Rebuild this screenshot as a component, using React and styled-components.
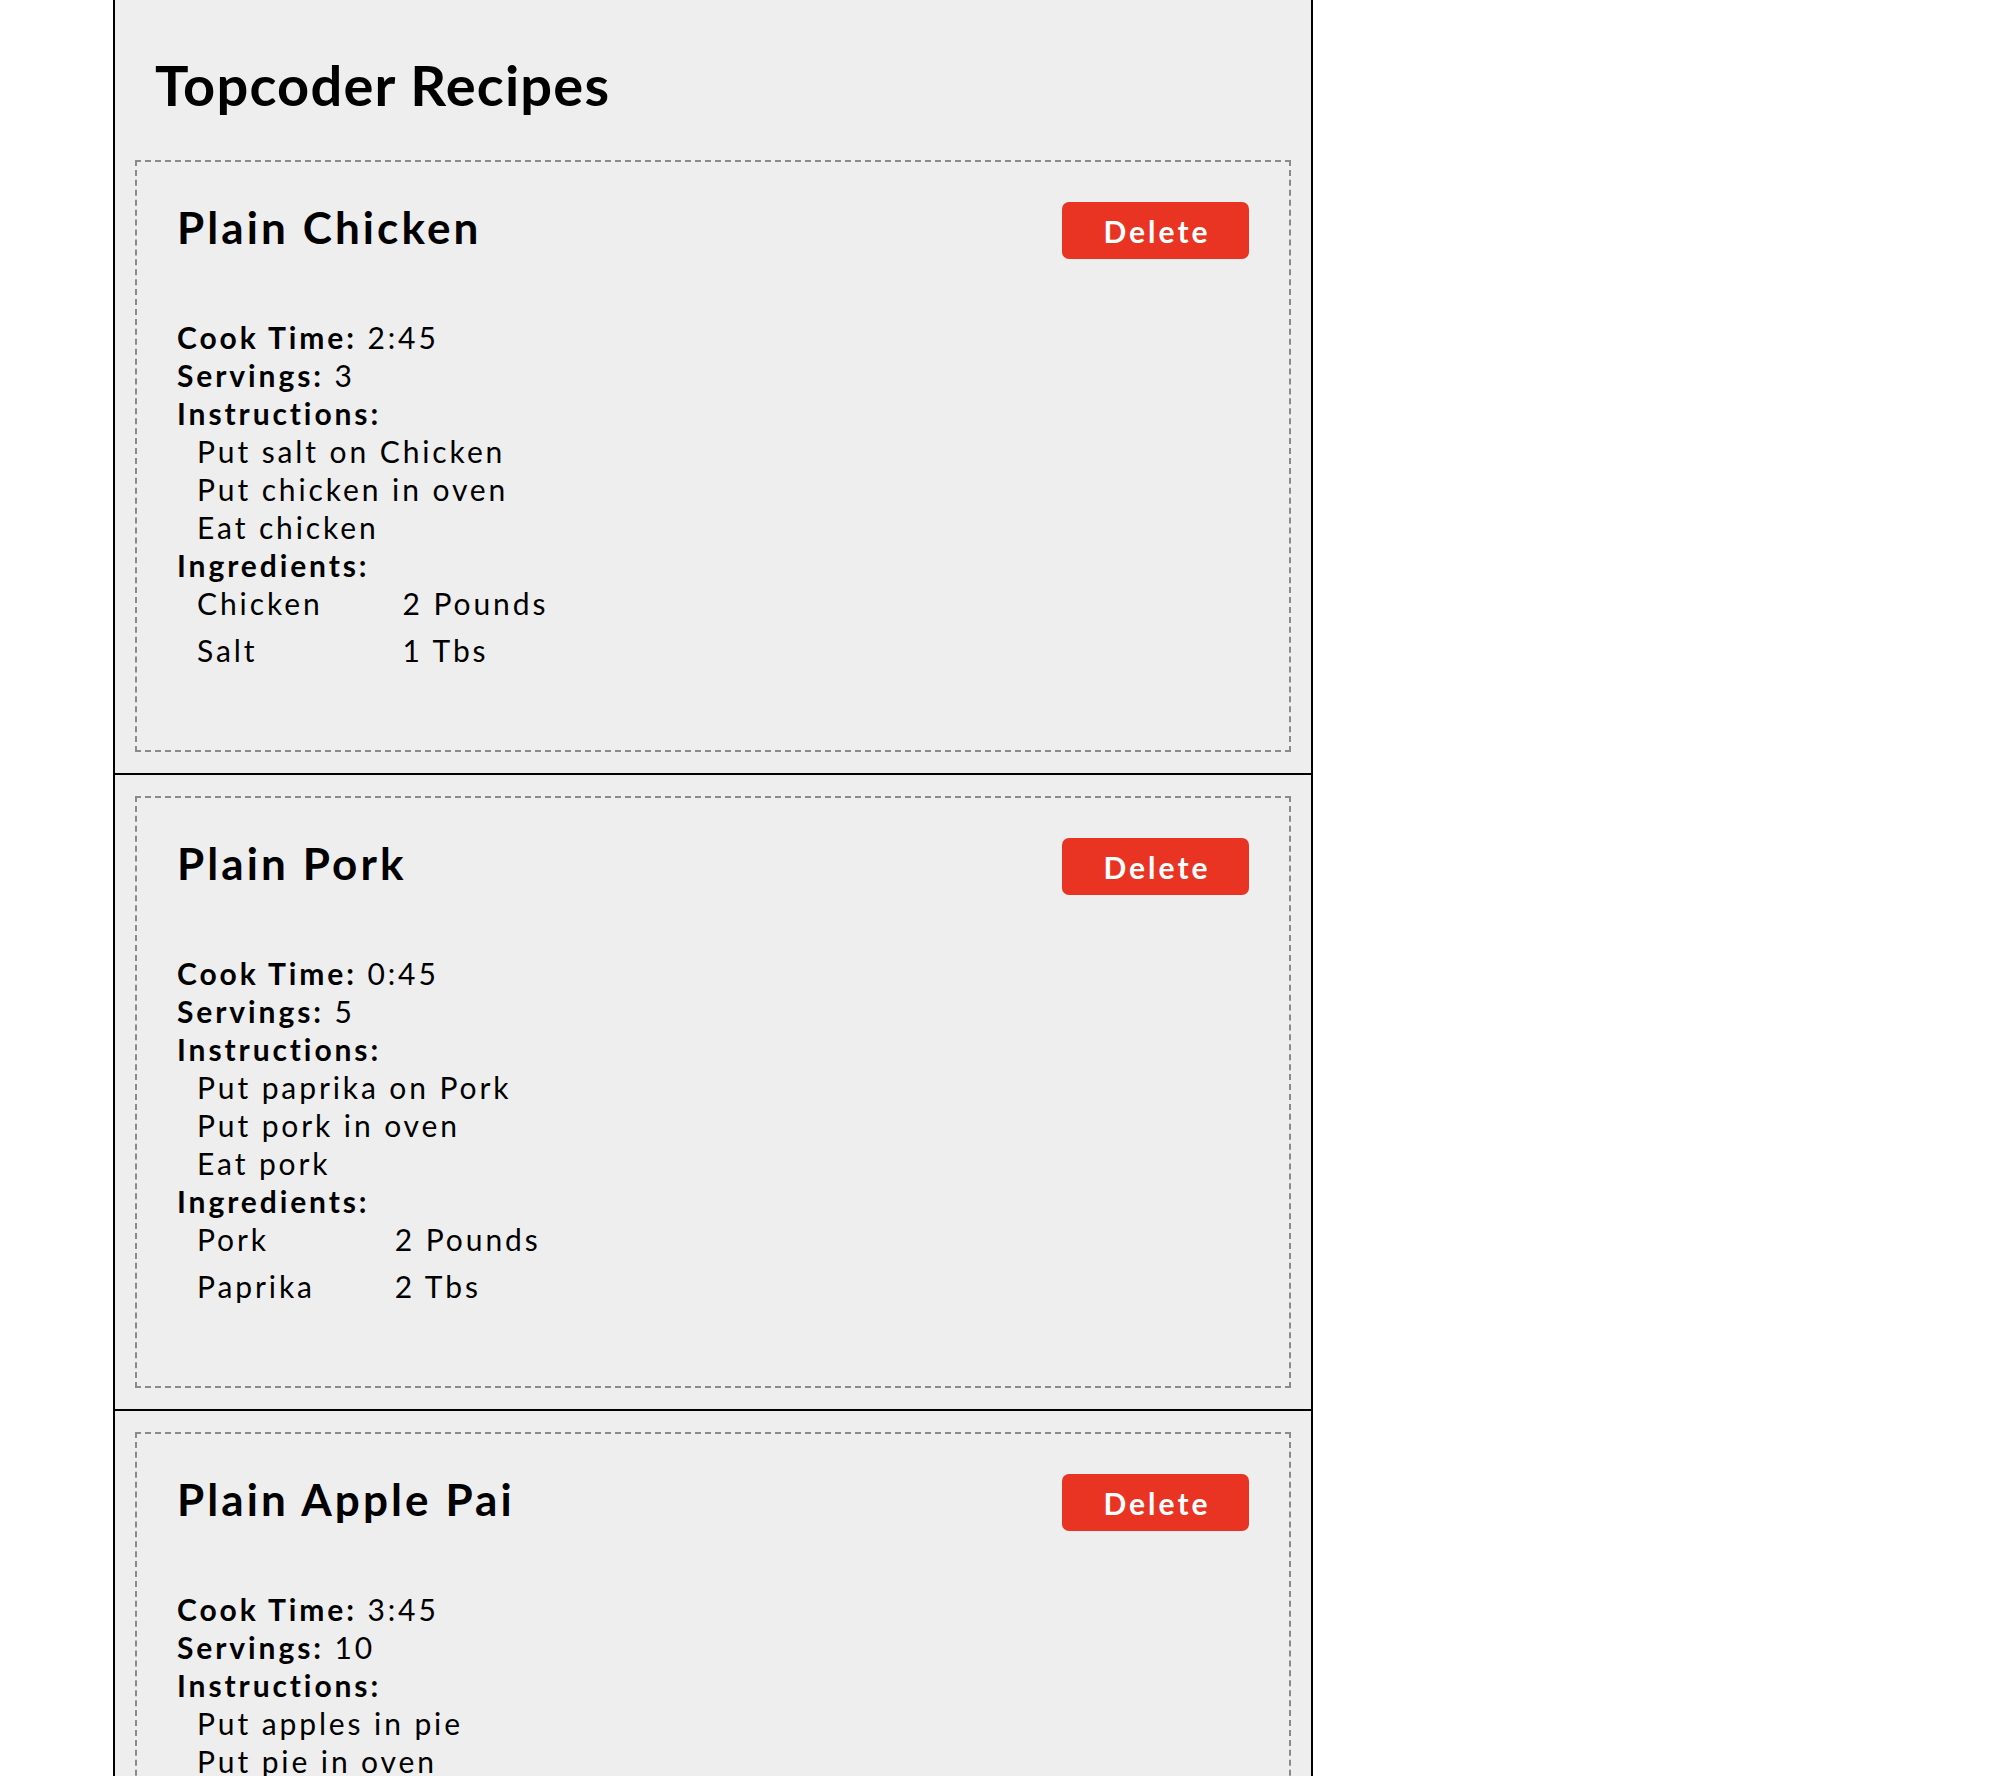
import React from "react";
import styled, { createGlobalStyle } from "styled-components";

const GlobalStyle = createGlobalStyle`
  html, body {
    margin: 0;
    padding: 0;
    background: #ffffff;
  }
  body {
    font-family: Lato, "Open Sans", "Liberation Sans", sans-serif;
    color: #000;
  }
  *, *::before, *::after { box-sizing: border-box; }
`;

const Column = styled.main`
  margin-left: 113px;
  width: 1200px;
  background: #eeeeee;
  border-left: 2px solid #000;
  border-right: 2px solid #000;
`;

const Header = styled.header`
  padding: 51px 0 21px 40px;
`;

const Title = styled.h1`
  margin: 0;
  font-size: 56px;
  font-weight: 700;
  line-height: 1.2;
  letter-spacing: 1.2px;
`;

const Section = styled.section`
  padding: 21px 20px;
  border-bottom: 2px solid #000;
`;

const Card = styled.article`
  border: 2px dashed #8a8a8a;
  padding: 40px;
`;

const CardHead = styled.div`
  display: flex;
  justify-content: space-between;
  align-items: center;
  height: 57px;
`;

const Name = styled.h2`
  margin: 0;
  font-size: 44px;
  font-weight: 700;
  line-height: 1.2;
  letter-spacing: 3.1px;
  transform: translateY(-3px);
`;

const DeleteButton = styled.button`
  width: 187px;
  height: 57px;
  padding: 0;
  border: none;
  border-radius: 7px;
  background: #e93323;
  color: #fff;
  font-family: inherit;
  font-size: 30px;
  font-weight: 700;
  letter-spacing: 3px;
  text-indent: 3px;
  cursor: pointer;
`;

const Details = styled.div`
  margin-top: 59px;
  font-size: 30px;
  line-height: 38px;
  letter-spacing: 2.9px;
`;

const Line = styled.div``;

const Label = styled.b`
  font-weight: 700;
`;

const Steps = styled.ul`
  list-style: none;
  margin: 0;
  padding: 0 0 0 20px;
`;

const Ingredients = styled.div`
  display: grid;
  grid-template-columns: max-content max-content;
  column-gap: ${(p) => p.$gap}px;
  row-gap: 9px;
  margin: 0 0 41px 0;
  padding: 0 0 0 20px;
`;

const recipes = [
  {
    name: "Plain Chicken",
    time: "2:45",
    servings: 3,
    steps: ["Put salt on Chicken", "Put chicken in oven", "Eat chicken"],
    ingredients: [
      ["Chicken", "2 Pounds"],
      ["Salt", "1 Tbs"],
    ],
  },
  {
    name: "Plain Pork",
    time: "0:45",
    servings: 5,
    steps: ["Put paprika on Pork", "Put pork in oven", "Eat pork"],
    ingredients: [
      ["Pork", "2 Pounds"],
      ["Paprika", "2 Tbs"],
    ],
  },
  {
    name: "Plain Apple Pai",
    time: "3:45",
    servings: 10,
    steps: ["Put apples in pie", "Put pie in oven", "Eat pie"],
    ingredients: [
      ["Apples", "5 Pieces"],
      ["Dough", "1 Pound"],
    ],
  },
];

function Recipe({ r }) {
  return (
    <Section>
      <Card>
        <CardHead>
          <Name>{r.name}</Name>
          <DeleteButton>Delete</DeleteButton>
        </CardHead>
        <Details>
          <Line>
            <Label>Cook Time:</Label> {r.time}
          </Line>
          <Line>
            <Label>Servings:</Label> {r.servings}
          </Line>
          <Line>
            <Label>Instructions:</Label>
          </Line>
          <Steps>
            {r.steps.map((s) => (
              <li key={s}>{s}</li>
            ))}
          </Steps>
          <Line>
            <Label>Ingredients:</Label>
          </Line>
          <Ingredients $gap={80}>
            {r.ingredients.map(([n, q]) => (
              <React.Fragment key={n}>
                <span>{n}</span>
                <span>{q}</span>
              </React.Fragment>
            ))}
          </Ingredients>
        </Details>
      </Card>
    </Section>
  );
}

export default function App() {
  return (
    <>
      <GlobalStyle />
      <Column>
        <Header>
          <Title>Topcoder Recipes</Title>
        </Header>
        {recipes.map((r) => (
          <Recipe key={r.name} r={r} />
        ))}
      </Column>
    </>
  );
}
